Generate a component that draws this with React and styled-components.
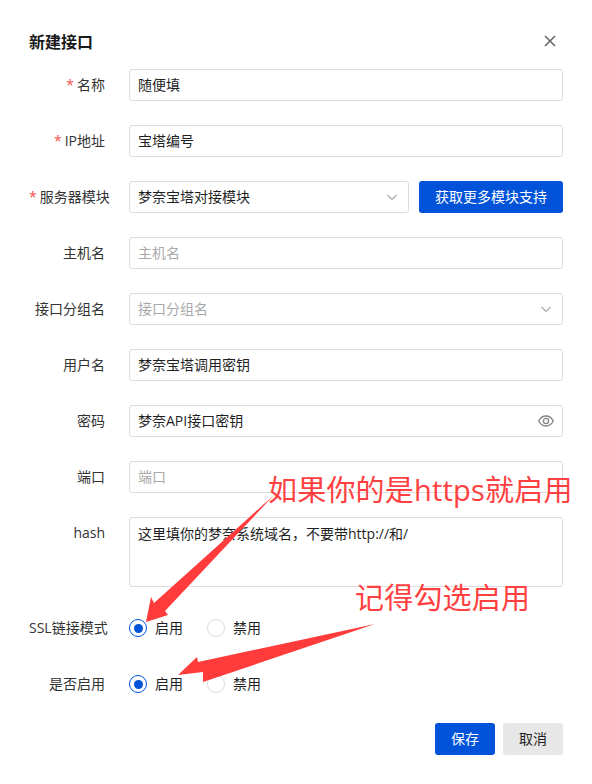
import React from "react";
import styled, { createGlobalStyle } from "styled-components";

const rows = [
  { label: "名称", required: true, value: "随便填" },
  { label: "IP地址", required: true, value: "宝塔编号" },
  { label: "服务器模块", required: true, value: "梦奈宝塔对接模块", select: true, action: "获取更多模块支持" },
  { label: "主机名", placeholder: "主机名" },
  { label: "接口分组名", placeholder: "接口分组名", select: true },
  { label: "用户名", value: "梦奈宝塔调用密钥" },
  { label: "密码", value: "梦奈API接口密钥", eye: true },
  { label: "端口", placeholder: "端口" },
];

const Chevron = () => (
  <IconSlot>
    <svg width="12" height="12" viewBox="0 0 12 12" fill="none" stroke="#a8a8a8" strokeWidth="1.2">
      <path d="M1.5 4l4.500 4.500L10.500 4" />
    </svg>
  </IconSlot>
);

const Eye = () => (
  <IconSlot>
    <svg width="16" height="12" viewBox="0 0 16 12" fill="none" stroke="#858585" strokeWidth="1.3">
      <path d="M.7 6C2.500 2.600 5 1 8 1s5.500 1.600 7.300 5C13.500 9.400 11 11 8 11S2.500 9.400.7 6z" />
      <circle cx="8" cy="6" r="2.600" />
    </svg>
  </IconSlot>
);

const App = () => {
  return (
    <Dialog>
      <GlobalStyle />
      <Header>
        <Title>新建接口</Title>
        <CloseIcon>
          <svg width="12" height="12" viewBox="0 0 12 12" stroke="#666" strokeWidth="1.6">
            <path d="M1 1l10 10M11 1L1 11" />
          </svg>
        </CloseIcon>
      </Header>
      <Form>
        {rows.map((row) => (
          <Row key={row.label}>
            <Label>
              {row.required && <Star>*</Star>}
              {row.label}
            </Label>
            <Field>
              <Box>
                <BoxText $muted={!row.value}>{row.value || row.placeholder}</BoxText>
                {row.select && <Chevron />}
                {row.eye && <Eye />}
              </Box>
              {row.action && <ActionButton>{row.action}</ActionButton>}
            </Field>
          </Row>
        ))}
        <Row>
          <Label>hash</Label>
          <Field>
            <TextArea>这里填你的梦奈系统域名，不要带http://和/</TextArea>
          </Field>
        </Row>
        <RadioRow>
          <Label>SSL链接模式</Label>
          <RadioGroup>
            <RadioItem><Radio $on />启用</RadioItem>
            <RadioItem><Radio />禁用</RadioItem>
          </RadioGroup>
        </RadioRow>
        <RadioRow>
          <Label>是否启用</Label>
          <RadioGroup>
            <RadioItem><Radio $on />启用</RadioItem>
            <RadioItem><Radio />禁用</RadioItem>
          </RadioGroup>
        </RadioRow>
      </Form>
      <Footer>
        <FooterButton $primary>保存</FooterButton>
        <FooterButton>取消</FooterButton>
      </Footer>

      <Arrows width="592" height="784" viewBox="0 0 592 784">
        <polygon points="274,495 165,611 168,615 146,622 151,597 154,603" fill="#ff3b3b" />
        <polygon points="375,624 203,682 203,672 178,675 197,657 198,662" fill="#ff3b3b" />
      </Arrows>
      <Note $x={268} $y={472}>如果你的是https就启用</Note>
      <Note $x={355} $y={580}>记得勾选启用</Note>
    </Dialog>
  );
};

export default App;

const GlobalStyle = createGlobalStyle`
  html, body {
    margin: 0;
    padding: 0;
    background: #fff;
  }
`;

const Dialog = styled.div`
  position: relative;
  box-sizing: border-box;
  width: 592px;
  height: 784px;
  padding: 29px 29px 0;
  overflow: hidden;
  background: #fff;
  color: #1f1f1f;
  font-family: "Open Sans", "Noto Sans CJK SC", sans-serif;
  font-size: 14px;
`;

const Header = styled.div`
  display: flex;
  align-items: center;
  justify-content: space-between;
  height: 24px;
  padding-right: 7px;
`;

const Title = styled.div`
  font-size: 16px;
  font-weight: 700;
  color: #1a1a1a;
`;

const CloseIcon = styled.div`
  display: flex;
  width: 12px;
  height: 12px;
`;

const Form = styled.div`
  display: flex;
  flex-direction: column;
  gap: 24px;
  margin-top: 16px;
`;

const Row = styled.div`
  display: flex;
  gap: 24px;
`;

const RadioRow = styled(Row)`
  align-items: center;
  height: 32px;
`;

const Label = styled.div`
  width: 76px;
  flex: none;
  height: 32px;
  line-height: 32px;
  text-align: right;
  white-space: nowrap;
  color: #333;
`;

const Star = styled.span`
  margin-right: 3px;
  color: #f5504f;
`;

const Field = styled.div`
  display: flex;
  flex: 1;
  gap: 10px;
`;

const Box = styled.div`
  box-sizing: border-box;
  display: flex;
  flex: 1;
  align-items: center;
  justify-content: space-between;
  height: 32px;
  padding: 0 8px;
  border: 1px solid #dcdcdc;
  border-radius: 3px;
`;

const BoxText = styled.span`
  line-height: 28px;
  color: ${(props) => (props.$muted ? "#a9a9a9" : "#1f1f1f")};
`;

const IconSlot = styled.span`
  display: flex;
  justify-content: center;
  width: 16px;
`;

const ActionButton = styled.div`
  width: 144px;
  height: 32px;
  line-height: 32px;
  text-align: center;
  border-radius: 3px;
  background: #0052d9;
  color: #fff;
`;

const TextArea = styled.div`
  box-sizing: border-box;
  flex: 1;
  height: 70px;
  margin-bottom: 1px;
  padding: 5px 8px;
  border: 1px solid #dcdcdc;
  border-radius: 3px;
  line-height: 22px;
`;

const RadioGroup = styled.div`
  display: flex;
  gap: 24px;
`;

const RadioItem = styled.div`
  display: flex;
  align-items: center;
  gap: 8px;
  line-height: 18px;
`;

const Radio = styled.span`
  box-sizing: border-box;
  display: block;
  position: relative;
  width: 18px;
  height: 18px;
  border: 1px solid ${(props) => (props.$on ? "#0052d9" : "#dcdcdc")};
  border-radius: 50%;

  &::after {
    content: "";
    display: ${(props) => (props.$on ? "block" : "none")};
    position: absolute;
    inset: 3.5px;
    border-radius: 50%;
    background: #0052d9;
  }
`;

const Footer = styled.div`
  display: flex;
  justify-content: flex-end;
  gap: 8px;
  margin-top: 23px;
`;

const FooterButton = styled.div`
  width: 60px;
  height: 32px;
  line-height: 32px;
  text-align: center;
  border-radius: 3px;
  background: ${(props) => (props.$primary ? "#0052d9" : "#e7e7e7")};
  color: ${(props) => (props.$primary ? "#fff" : "#1f1f1f")};
`;

const Arrows = styled.svg`
  position: absolute;
  top: 0;
  left: 0;
`;

const Note = styled.div`
  position: absolute;
  left: ${(props) => props.$x}px;
  top: ${(props) => props.$y}px;
  font-size: 29px;
  letter-spacing: 0.2px;
  line-height: 36px;
  white-space: nowrap;
  color: #ff4040;
`;
